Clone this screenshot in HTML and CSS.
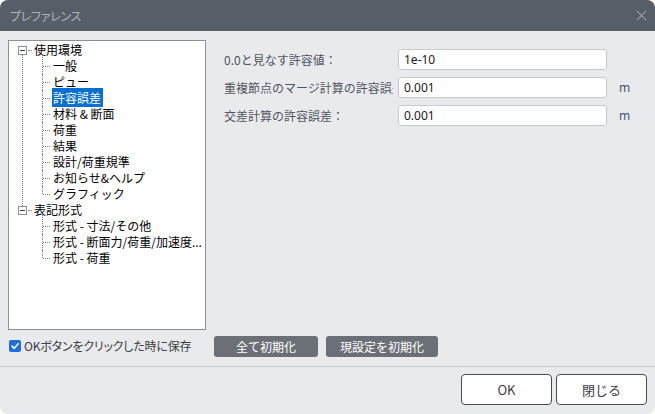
FILE: index.html
```html
<!DOCTYPE html>
<html>
<head>
    <title>プレファレンス</title>
    <link rel="stylesheet" href="styles.css">
</head>
<body>
    <div class="dialog">
        <div class="titlebar">
            <span class="title">プレファレンス</span>
            <span class="close"></span>
        </div>

        <div class="content">
            <div class="main">
                <div class="tree">
                    <ul class="roots">
                        <li class="root">
                            <div class="node"><span class="toggle"></span><span class="label">使用環境</span></div>
                            <ul class="children">
                                <li><span class="label">一般</span></li>
                                <li><span class="label">ピュー</span></li>
                                <li><span class="label selected">許容誤差</span></li>
                                <li><span class="label">材料 &amp; 断面</span></li>
                                <li><span class="label">荷重</span></li>
                                <li><span class="label">結果</span></li>
                                <li><span class="label">設計/荷重規準</span></li>
                                <li><span class="label">お知らせ&amp;ヘルプ</span></li>
                                <li><span class="label">グラフィック</span></li>
                            </ul>
                        </li>
                        <li class="root last">
                            <div class="node"><span class="toggle"></span><span class="label">表記形式</span></div>
                            <ul class="children">
                                <li><span class="label">形式 - 寸法/その他</span></li>
                                <li><span class="label">形式 - 断面力/荷重/加速度...</span></li>
                                <li><span class="label">形式 - 荷重</span></li>
                            </ul>
                        </li>
                    </ul>
                </div>

                <div class="form">
                    <div class="field">
                        <label>0.0と見なす許容値：</label>
                        <input type="text" value="1e-10">
                        <span class="unit"></span>
                    </div>
                    <div class="field">
                        <label>重複節点のマージ計算の許容誤差：</label>
                        <input type="text" value="0.001">
                        <span class="unit">m</span>
                    </div>
                    <div class="field">
                        <label>交差計算の許容誤差：</label>
                        <input type="text" value="0.001">
                        <span class="unit">m</span>
                    </div>
                </div>
            </div>

            <div class="actions">
                <label class="check">
                    <span class="box">
                        <svg width="10" height="10" viewBox="0 0 10 10"><path d="M2 5.2 L4.2 7.3 L8.2 2.8" fill="none" stroke="#fff" stroke-width="1.6" stroke-linecap="round" stroke-linejoin="round"/></svg>
                    </span>
                    OKボタンをクリックした時に保存
                </label>
                <button class="dark wide1">全て初期化</button>
                <button class="dark wide2">現設定を初期化</button>
            </div>
        </div>

        <div class="footer">
            <button class="plain">OK</button>
            <button class="plain">閉じる</button>
        </div>
    </div>
</body>
</html>
```

FILE: styles.css
```css
body {
    margin: 0;
    background-color: #fff;
    font-family: "Noto Sans CJK JP", "Noto Sans", sans-serif;
    font-size: 12px;
}
.dialog {
    width: 655px;
    height: 414px;
    background-color: #e9eaee;
    border-radius: 8px;
    overflow: hidden;
    display: flex;
    flex-direction: column;
}
.titlebar {
    height: 31px;
    flex-shrink: 0;
    background-color: #575e66;
    display: flex;
    align-items: center;
    justify-content: space-between;
    padding: 0 10px;
}
.title {
    color: #adb2b8;
    font-size: 12px;
    font-feature-settings: "palt";
    letter-spacing: -0.3px;
}
.close {
    position: relative;
    width: 11px;
    height: 11px;
    margin-right: -2px;
}
.close::before,
.close::after {
    content: "";
    position: absolute;
    left: 5px;
    top: -1px;
    width: 1px;
    height: 13px;
    background-color: #9aa0a6;
    transform: rotate(45deg);
}
.close::after {
    transform: rotate(-45deg);
}

.content {
    flex: 1;
    padding: 9px 0 0 8px;
    border-bottom: 1px solid #c3c8ce;
}
.main {
    display: flex;
    gap: 18px;
}

/* tree view */
.tree {
    width: 196px;
    height: 287px;
    background-color: #fff;
    border: 1px solid #8d9197;
    padding-top: 1px;
    box-sizing: content-box;
    color: #000;
}
.tree ul {
    list-style: none;
    margin: 0;
    padding: 0;
}
.tree li {
    position: relative;
    line-height: 16px;
}
.node {
    display: flex;
    align-items: center;
    height: 16px;
}
.toggle {
    position: relative;
    width: 7px;
    height: 7px;
    margin-left: 9px;
    border: 1px solid #8c8f94;
    background-color: #fff;
}
.toggle::after {
    content: "";
    position: absolute;
    left: 1px;
    top: 3px;
    width: 5px;
    height: 1px;
    background-color: #1f3c8a;
}
.node .label {
    margin-left: 7px;
    position: relative;
}
.node .label::before {
    content: "";
    position: absolute;
    left: -6px;
    top: 8px;
    width: 4px;
    border-top: 1px dotted #808080;
}
/* vertical line between root nodes */
.root::before {
    content: "";
    position: absolute;
    left: 13px;
    top: 12px;
    bottom: -4px;
    border-left: 1px dotted #808080;
}
.root.last::before {
    display: none;
}
.children li {
    padding-left: 43px;
    height: 16px;
}
.children li::before {
    content: "";
    position: absolute;
    left: 33px;
    top: 0;
    height: 16px;
    border-left: 1px dotted #808080;
}
.children li:first-child::before {
    top: -4px;
    height: 20px;
}
.children li:last-child::before {
    height: 8px;
}
.children li:first-child:last-child::before {
    height: 12px;
}
.children li::after {
    content: "";
    position: absolute;
    left: 34px;
    top: 8px;
    width: 7px;
    border-top: 1px dotted #808080;
}
.children .label {
    padding: 0 1px;
    white-space: nowrap;
}
.children .label.selected {
    background-color: #0a6fd1;
    color: #fff;
    padding: 1px 2px 1px 1px;
}

/* tolerance form */
.form {
    display: flex;
    flex-direction: column;
    gap: 7px;
    padding-top: 9px;
}
.field {
    display: flex;
    align-items: center;
    height: 21px;
}
.field label {
    width: 169px;
    margin-right: 5px;
    color: #50555c;
    white-space: nowrap;
    overflow: hidden;
}
.field input {
    width: 209px;
    height: 21px;
    box-sizing: border-box;
    border: 1px solid #c6cad0;
    border-radius: 3px;
    background-color: #fff;
    padding: 0 5px;
    font-family: "Noto Sans", sans-serif;
    font-size: 12px;
    color: #1a1a1a;
}
.unit {
    margin-left: 12px;
    color: #46526e;
    font-family: "Noto Sans", sans-serif;
    font-size: 12px;
}

.actions {
    display: flex;
    align-items: center;
    margin-top: 6px;
    height: 21px;
}
.check {
    width: 205px;
    display: flex;
    align-items: center;
    gap: 3px;
    padding-left: 1px;
    color: #3a3d42;
    font-feature-settings: "palt";
    letter-spacing: -0.2px;
    margin-top: -2px;
}
.box {
    width: 12px;
    height: 12px;
    border-radius: 2px;
    background-color: #1e6fdb;
    display: flex;
    align-items: center;
    justify-content: center;
}
button {
    font-family: "Noto Sans CJK JP", "Noto Sans", sans-serif;
    font-size: 12px;
    cursor: pointer;
}
button.dark {
    height: 21px;
    border: none;
    border-radius: 3px;
    background-color: #6b7077;
    color: #fff;
    margin-right: 8px;
    padding: 0;
}
.wide1 {
    width: 104px;
}
.wide2 {
    width: 112px;
}

.footer {
    height: 47px;
    flex-shrink: 0;
    display: flex;
    justify-content: flex-end;
    align-items: flex-start;
    gap: 4px;
    padding: 7px 8px 0 0;
    box-sizing: border-box;
}
button.plain {
    width: 91px;
    height: 31px;
    background-color: #fff;
    border: 1px solid #484d53;
    border-radius: 4px;
    color: #3a3d42;
    font-size: 13px;
}
```
